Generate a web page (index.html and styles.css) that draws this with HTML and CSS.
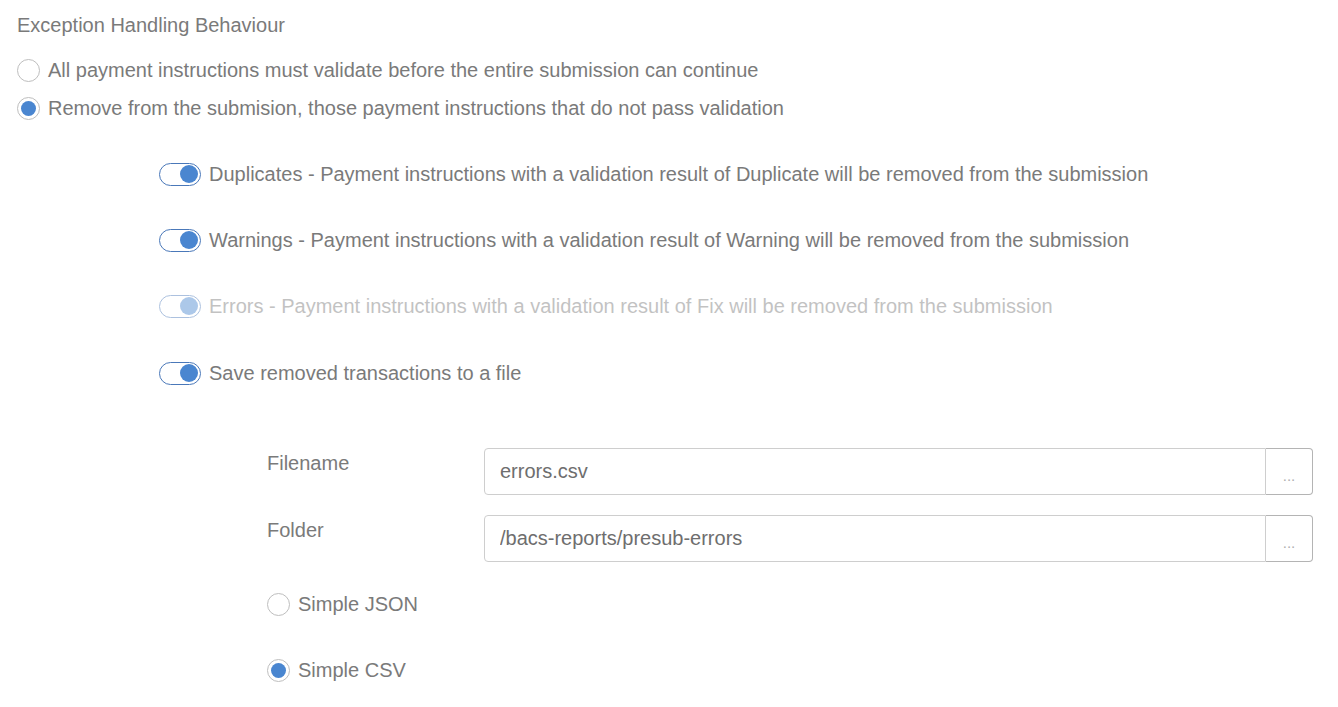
FILE: index.html
```html
<!DOCTYPE html>
<html lang="en">
<head>
    <meta charset="UTF-8">
    <meta name="viewport" content="width=device-width, initial-scale=1.0">
    <title>Exception Handling</title>
    <link rel="stylesheet" href="styles.css">
</head>
<body>
    <div class="exception-panel">
        <h4 class="panel-title">Exception Handling Behaviour</h4>

        <div class="radio-list">
            <label class="radio-row">
                <span class="radio"></span>
                All payment instructions must validate before the entire submission can continue
            </label>
            <label class="radio-row">
                <span class="radio checked"></span>
                Remove from the submision, those payment instructions that do not pass validation
            </label>
        </div>

        <div class="switch-list">
            <div class="switch-row">
                <span class="switch on"></span>
                <span>Duplicates - Payment instructions with a validation result of Duplicate will be removed from the submission</span>
            </div>
            <div class="switch-row">
                <span class="switch on"></span>
                <span>Warnings - Payment instructions with a validation result of Warning will be removed from the submission</span>
            </div>
            <div class="switch-row disabled">
                <span class="switch on"></span>
                <span>Errors - Payment instructions with a validation result of Fix will be removed from the submission</span>
            </div>
            <div class="switch-row">
                <span class="switch on"></span>
                <span>Save removed transactions to a file</span>
            </div>
        </div>

        <div class="file-settings">
            <div class="form-row">
                <label>Filename</label>
                <div class="input-group">
                    <input type="text" value="errors.csv">
                    <button>...</button>
                </div>
            </div>
            <div class="form-row">
                <label>Folder</label>
                <div class="input-group">
                    <input type="text" value="/bacs-reports/presub-errors">
                    <button>...</button>
                </div>
            </div>

            <div class="format-list">
                <label class="radio-row">
                    <span class="radio"></span>
                    Simple JSON
                </label>
                <label class="radio-row">
                    <span class="radio checked"></span>
                    Simple CSV
                </label>
            </div>
        </div>
    </div>
</body>
</html>
```

FILE: styles.css
```css
*{
    margin: 0;
    box-sizing: border-box;
}

body{
    font-family: "Liberation Sans", Arial, sans-serif;
    font-size: 20px;
    color: rgb(122, 122, 122);
    background-color: white;
}

.exception-panel{
    padding: 13px 18px 0 17px;
}

.panel-title{
    font-weight: normal;
    font-size: 20px;
    line-height: 24px;
    margin-bottom: 21px;
}

.radio-list{
    display: flex;
    flex-direction: column;
    gap: 14px;
}

.radio-row{
    display: flex;
    align-items: center;
    gap: 8px;
    line-height: 24px;
}

.radio{
    width: 23px;
    height: 23px;
    border-radius: 50%;
    border: 1px solid rgb(190, 190, 190);
    background-color: white;
    flex-shrink: 0;
    display: flex;
    align-items: center;
    justify-content: center;
}

.radio.checked::after{
    content: "";
    width: 15px;
    height: 15px;
    border-radius: 50%;
    background-color: rgb(74, 134, 208);
}

.switch-list{
    margin-top: 42px;
    padding-left: 142px;
    display: flex;
    flex-direction: column;
    gap: 42px;
}

.switch-row{
    display: flex;
    align-items: center;
    gap: 8px;
    line-height: 24px;
}

.switch-row:last-child{
    margin-top: 1px;
}

.switch{
    width: 42px;
    height: 23px;
    border-radius: 12px;
    border: 1px solid rgb(74, 120, 185);
    background-color: white;
    display: flex;
    align-items: center;
    justify-content: flex-end;
    padding-right: 2px;
    flex-shrink: 0;
}

.switch.on::after{
    content: "";
    width: 18px;
    height: 18px;
    border-radius: 50%;
    background-color: rgb(74, 134, 208);
}

.switch-row.disabled{
    opacity: 0.45;
}

.file-settings{
    margin-top: 63px;
    padding-left: 250px;
    display: flex;
    flex-direction: column;
    gap: 20px;
}

.form-row{
    display: flex;
    align-items: flex-start;
}

.form-row label{
    width: 217px;
    line-height: 24px;
    padding-top: 3px;
}

.input-group{
    display: flex;
    width: 829px;
    height: 47px;
}

.input-group input{
    flex: 1;
    border: 1px solid rgb(206, 206, 206);
    border-radius: 4px 0 0 4px;
    padding: 0 15px;
    font-family: inherit;
    font-size: 20px;
    color: rgb(110, 110, 110);
    outline: none;
}

.input-group button{
    width: 47px;
    padding: 8px 0 0;
    border: 1px solid rgb(180, 180, 180);
    border-left: none;
    border-radius: 0 4px 4px 0;
    background-color: white;
    color: rgb(175, 175, 175);
    font-family: inherit;
    font-size: 15px;
    cursor: pointer;
}

.format-list{
    margin-top: 10px;
    display: flex;
    flex-direction: column;
    gap: 42px;
}
```
